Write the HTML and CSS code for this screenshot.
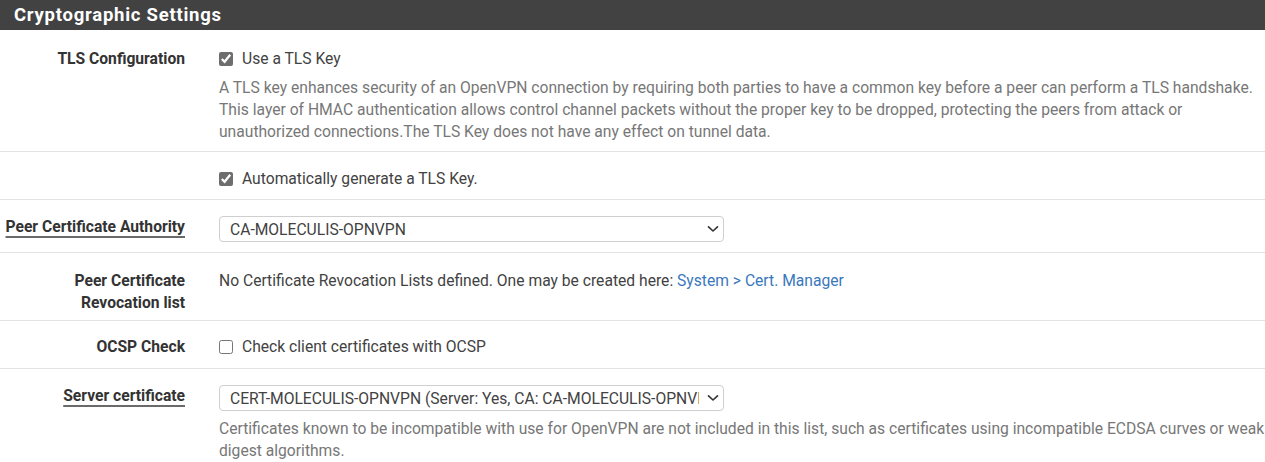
FILE: index.html
```html
<!DOCTYPE html>
<html>
<head>
<meta charset="utf-8">
<link rel="stylesheet" href="styles.css">
</head>
<body>
<div class="panel">
  <div class="panel-heading"><h2 class="panel-title">Cryptographic Settings</h2></div>
  <div class="panel-body">
    <div class="form-group row-first">
      <div class="control-label">TLS Configuration</div>
      <div class="field">
        <label class="check"><input type="checkbox" checked><span>Use a TLS Key</span></label>
        <p class="help">A TLS key enhances security of an OpenVPN connection by requiring both parties to have a common key before a peer can perform a TLS handshake. This layer of HMAC authentication allows control channel packets without the proper key to be dropped, protecting the peers from attack or unauthorized connections.The TLS Key does not have any effect on tunnel data.</p>
      </div>
    </div>
    <div class="form-group">
      <div class="control-label"></div>
      <div class="field">
        <label class="check"><input type="checkbox" checked><span>Automatically generate a TLS Key.</span></label>
      </div>
    </div>
    <div class="form-group row-select">
      <div class="control-label"><span class="required">Peer Certificate Authority</span></div>
      <div class="field">
        <div class="select-wrap">
          <select class="select"><option>CA-MOLECULIS-OPNVPN</option></select>
          <svg class="chevron" width="12" height="8" viewBox="0 0 12 8"><path d="M1.5 1.8 L6 6 L10.5 1.8" fill="none" stroke="#333" stroke-width="1.6" stroke-linecap="round" stroke-linejoin="round"/></svg>
        </div>
      </div>
    </div>
    <div class="form-group row-crl">
      <div class="control-label">Peer Certificate<br>Revocation list</div>
      <div class="field">
        <div class="text">No Certificate Revocation Lists defined. One may be created here: <a href="#">System &gt; Cert. Manager</a></div>
      </div>
    </div>
    <div class="form-group row-ocsp">
      <div class="control-label">OCSP Check</div>
      <div class="field">
        <label class="check"><input type="checkbox"><span>Check client certificates with OCSP</span></label>
      </div>
    </div>
    <div class="form-group row-select row-last">
      <div class="control-label"><span class="required">Server certificate</span></div>
      <div class="field">
        <div class="select-wrap">
          <select class="select"><option>CERT-MOLECULIS-OPNVPN (Server: Yes, CA: CA-MOLECULIS-OPNVPN)</option></select>
          <svg class="chevron" width="12" height="8" viewBox="0 0 12 8"><path d="M1.5 1.8 L6 6 L10.5 1.8" fill="none" stroke="#333" stroke-width="1.6" stroke-linecap="round" stroke-linejoin="round"/></svg>
        </div>
        <p class="help help-tight">Certificates known to be incompatible with use for OpenVPN are not included in this list, such as certificates using incompatible ECDSA curves or weak digest algorithms.</p>
      </div>
    </div>
  </div>
</div>
</body>
</html>
```

FILE: styles.css
```css
* { box-sizing: border-box; }

html, body {
  margin: 0;
  padding: 0;
  background: #ffffff;
}

body {
  font-family: Roboto, "Liberation Sans", Arial, sans-serif;
  font-size: 15.65px;
  line-height: 22px;
  color: #424242;
  overflow: hidden;
}

.panel-heading {
  background: #424242;
  height: 30px;
  padding: 0 14px;
  display: flex;
  align-items: center;
}

.panel-title {
  margin: 0;
  color: #ffffff;
  font-size: 18.5px;
  font-weight: 700;
  line-height: 30px;
  letter-spacing: 0.75px;
}

.form-group {
  display: grid;
  grid-template-columns: 185px 1fr;
  column-gap: 34px;
  padding: 16px 0 9px;
  border-bottom: 1px solid #e3e3e3;
}

.row-first { padding-top: 18px; padding-bottom: 8px; }
.row-select { padding-bottom: 10px; }
.row-crl { padding: 17px 0 6px; }
.row-ocsp { padding: 15px 0 10px; }
.row-last { border-bottom: none; }

.control-label {
  text-align: right;
  font-weight: 700;
  color: #333333;
}

.required {
  text-decoration: underline;
  text-decoration-thickness: 2px;
  text-underline-offset: 4px;
  text-decoration-color: #6a6a6a;
}

.field { min-width: 0; }

.check {
  display: flex;
  align-items: center;
  gap: 9px;
  height: 22px;
}

.check input {
  width: 14px;
  height: 14px;
  margin: 0;
  accent-color: #6e6e6e;
}

.help {
  margin: 7px 0 0;
  color: #777777;
}

.help-tight { margin-top: 7px; }

.text { color: #424242; }

a {
  color: #3a78bd;
  text-decoration: none;
}

.select-wrap {
  position: relative;
  width: 505px;
}

.select {
  appearance: none;
  -webkit-appearance: none;
  width: 100%;
  height: 26px;
  border: 1px solid #cfcfcf;
  border-radius: 4px;
  background: #ffffff;
  padding: 0 24px 0 10px;
  font-family: inherit;
  font-size: 15.65px;
  color: #424242;
  display: block;
}

.chevron {
  position: absolute;
  right: 5px;
  top: 9px;
}
```
